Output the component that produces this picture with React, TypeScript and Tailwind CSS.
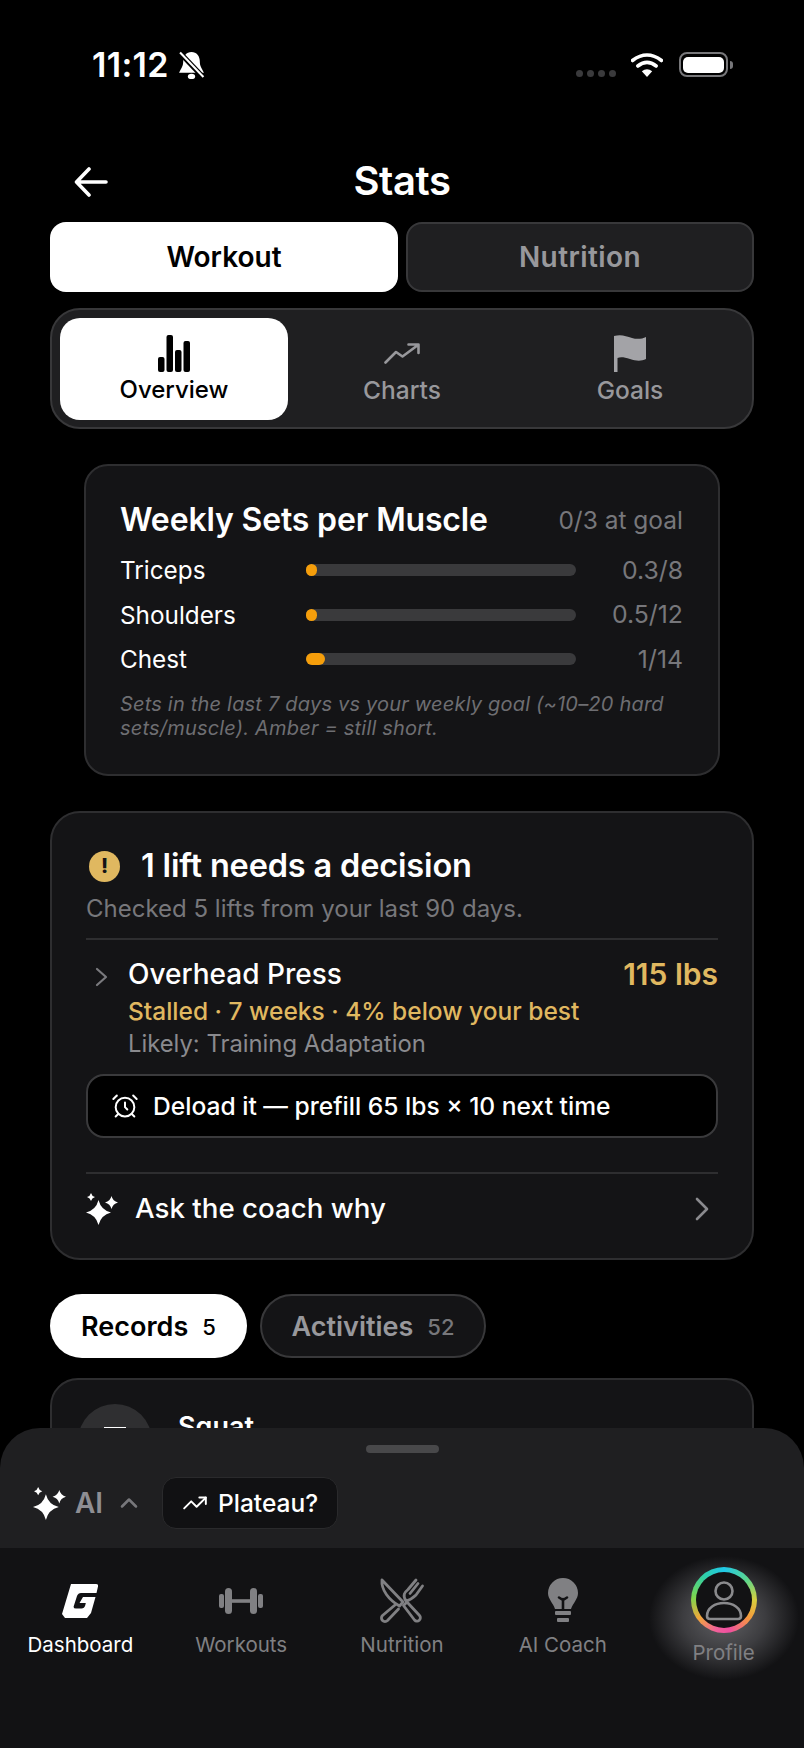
import { AlarmClock, ChevronUp, TrendingUp } from "lucide-react";

function Sparkles({ className }: { className?: string }) {
  return (
    <svg className={className} viewBox="0 0 32 32" fill="currentColor">
      <path d="M12.5 7Q15 17 25 19.5Q15 22 12.5 32Q10 22 0 19.5Q10 17 12.5 7Z" />
      <path d="M5 0Q5.8 3.2 9 4Q5.8 4.8 5 8Q4.2 4.8 1 4Q4.2 3.2 5 0Z" />
      <path d="M25.5 3Q26.8 8.2 32 9.5Q26.8 10.8 25.5 16Q24.2 10.8 19 9.5Q24.2 8.2 25.5 3Z" />
    </svg>
  );
}

function StatusBar() {
  return (
    <div className="flex h-[130px] items-center justify-between pb-[1px] pl-[92px] pr-[71px]">
      <div className="flex items-center gap-[9px]">
        <span className="text-[34px] font-semibold leading-none tracking-[0.01em]">11:12</span>
        <svg className="h-[28px] w-[27px]" viewBox="0 0 26 27">
          <path fill="#fff" d="M13 1C8 1 5 5 5 10C5 15 3 17 1 21H25C23 17 21 15 21 10C21 5 18 1 13 1Z" />
          <ellipse cx="13" cy="24.5" rx="3.5" ry="2.5" fill="#fff" />
          <path d="M2 2L24 25" stroke="#000" strokeWidth="5" />
          <path d="M2 1.5L24.5 25" stroke="#fff" strokeWidth="2" />
        </svg>
      </div>
      <div className="flex items-center">
        <div className="mr-[15px] mt-[18px] flex gap-[4px]">
          <span className="h-[7px] w-[7px] rounded-full bg-[#3a3a3c]" />
          <span className="h-[7px] w-[7px] rounded-full bg-[#3a3a3c]" />
          <span className="h-[7px] w-[7px] rounded-full bg-[#3a3a3c]" />
          <span className="h-[7px] w-[7px] rounded-full bg-[#3a3a3c]" />
        </div>
        <svg className="mr-[16px] h-[24px] w-[32px]" viewBox="0 0 32 24" fill="none">
          <path d="M1.5 7.5Q16 -3.5 30.5 7.5" stroke="#fff" strokeWidth="3.6" strokeLinecap="round" />
          <path d="M6.8 13Q16 5.8 25.2 13" stroke="#fff" strokeWidth="3.6" strokeLinecap="round" />
          <path d="M16 24L10.8 18.2Q16 14.4 21.2 18.2Z" fill="#fff" />
        </svg>
        <div className="flex items-center">
          <div className="flex h-[25px] w-[49px] items-center justify-center rounded-[8px] border-2 border-[#77777a]">
            <div className="h-[16px] w-[41px] rounded-[5px] bg-white" />
          </div>
          <div className="ml-[2px] h-[8px] w-[3px] rounded-r-full bg-[#77777a]" />
        </div>
      </div>
    </div>
  );
}

function Header() {
  return (
    <div className="relative flex h-[92px] items-center justify-center pt-[10px]">
      <svg className="absolute left-[74px] top-[37px] h-[30px] w-[34px]" viewBox="0 0 34 30" fill="none" stroke="#fff" strokeWidth="3.6" strokeLinecap="round" strokeLinejoin="round">
        <path d="M32 15H3M15 2L2.5 15L15 28" />
      </svg>
      <h1 className="text-[40px] font-semibold leading-none tracking-[-0.01em]">Stats</h1>
    </div>
  );
}

function TopTabs() {
  return (
    <div className="mx-[50px] flex gap-[8px]">
      <div className="flex h-[70px] w-[348px] items-center justify-center rounded-[16px] bg-white text-[28px] font-semibold text-black">Workout</div>
      <div className="flex h-[70px] w-[348px] items-center justify-center rounded-[16px] border-2 border-[#38383a] bg-[#1f1f21] text-[28px] font-semibold tracking-[0.015em] text-[#98989c]">Nutrition</div>
    </div>
  );
}

function SubTabs() {
  return (
    <div className="mx-[50px] mt-[16px] grid h-[121px] grid-cols-3 rounded-[30px] border-2 border-[#38383a] bg-[#1f1f21] px-[8px] pb-[7px] pt-[8px]">
      <div className="flex flex-col items-center rounded-[20px] bg-white pt-[17px] text-black">
        <svg className="h-[37px] w-[32px]" viewBox="0 0 32 37" fill="#000">
          <rect x="0" y="22" width="6.5" height="15" rx="2" />
          <rect x="8.5" y="0" width="6.5" height="37" rx="2" />
          <rect x="17" y="15" width="6.5" height="22" rx="2" />
          <rect x="25.5" y="6" width="6.5" height="31" rx="2" />
        </svg>
        <span className="mt-[3px] text-[24px] font-medium leading-[30px]">Overview</span>
      </div>
      <div className="flex flex-col items-center pt-[17px] text-[#98989c]">
        <div className="flex h-[37px] items-end">
          <svg className="mb-[8px] h-[21px] w-[36px]" viewBox="0 0 36 21" fill="none" stroke="#98989c" strokeWidth="2.6" strokeLinecap="round" strokeLinejoin="round">
            <path d="M1.5 19.5L12 9L18.5 13.5L34 2M24.5 1.5H34.5V10" />
          </svg>
        </div>
        <span className="mt-[3px] text-[24.5px] font-medium leading-[30px]">Charts</span>
      </div>
      <div className="flex flex-col items-center pt-[17px] text-[#98989c]">
        <svg className="h-[37px] w-[32px]" viewBox="0 0 32 37" fill="#a3a3a7">
          <path d="M0 1C7 -1 12 1 18 3C23 4.5 28 4 32 2V24C27 26.5 22 26 16 24C10 22 6 22 3.5 23V37H0Z" />
        </svg>
        <span className="mt-[3px] text-[24.5px] font-medium leading-[30px]">Goals</span>
      </div>
    </div>
  );
}

const muscles = [
  { name: "Triceps", value: "0.3/8", fill: 11 },
  { name: "Shoulders", value: "0.5/12", fill: 11 },
  { name: "Chest", value: "1/14", fill: 19 },
];

function WeeklySets() {
  return (
    <div className="mx-[84px] mt-[35px] h-[312px] rounded-[24px] border-2 border-[#2e2e30] bg-[#141416] pl-[34px] pr-[35px] pt-[34px]">
      <div className="flex items-center justify-between">
        <span className="text-[32px] font-semibold leading-[40px] tracking-[-0.005em]">Weekly Sets per Muscle</span>
        <span className="text-[24.5px] leading-[40px] text-[#77777b]">0/3 at goal</span>
      </div>
      <div className="mt-[8px]">
        {muscles.map((m) => (
          <div key={m.name} className="flex h-[44.5px] items-center">
            <span className="w-[186px] text-[24.3px]">{m.name}</span>
            <div className="h-[12px] w-[270px] rounded-full bg-[#3a3a3c]">
              <div className="h-[12px] rounded-full bg-[#f59e0b]" style={{ width: m.fill }} />
            </div>
            <span className="flex-1 text-right text-[24.8px] text-[#77777b]">{m.value}</span>
          </div>
        ))}
      </div>
      <p className="mt-[10px] text-[20px] italic leading-[24px] tracking-[0.01em] text-[#6e6e72]">
        Sets in the last 7 days vs your weekly goal (~10–20 hard sets/muscle). Amber = still short.
      </p>
    </div>
  );
}

function Decision() {
  return (
    <div className="mx-[50px] mt-[35px] h-[449px] rounded-[30px] border-2 border-[#2e2e30] bg-[#141416] px-[34px] pt-[33px]">
      <div className="flex h-[40px] items-center">
        <div className="ml-[3px] flex h-[31px] w-[31px] items-center justify-center rounded-full bg-[#e0b860] text-[20px] font-extrabold text-[#141416]">!</div>
        <span className="ml-[21px] text-[32.5px] font-semibold leading-[40px] tracking-[-0.005em]">1 lift needs a decision</span>
      </div>
      <p className="mt-[8px] text-[24px] leading-[30px] text-[#77777b]">Checked 5 lifts from your last 90 days.</p>
      <div className="mt-[14px] h-[2px] bg-[#2e2e30]" />
      <div className="relative pl-[42px] pt-[16px]">
        <svg className="absolute left-[9px] top-[27px] h-[20px] w-[13px]" viewBox="0 0 13 20" fill="none" stroke="#7a7a7e" strokeWidth="2.2" strokeLinecap="round" strokeLinejoin="round">
          <path d="M2 2L11 10L2 18" />
        </svg>
        <div className="flex items-center justify-between">
          <span className="text-[28px] font-medium leading-[36px]">Overhead Press</span>
          <span className="-mt-[1px] text-[30px] font-semibold leading-[36px] text-[#e0b860]">115 lbs</span>
        </div>
        <p className="mt-[1px] text-[24.5px] font-medium leading-[36px] text-[#e0b860]">Stalled · 7 weeks · 4% below your best</p>
        <p className="text-[23.8px] leading-[30px] text-[#8a8a8e]">Likely: Training Adaptation</p>
      </div>
      <div className="mt-[15px] flex h-[64px] items-center rounded-[18px] border-2 border-[#3a3a3c] bg-black pl-[23px]">
        <AlarmClock className="h-[28px] w-[28px]" strokeWidth={1.7} />
        <span className="ml-[14px] text-[24.6px] font-medium">Deload it — prefill 65 lbs × 10 next time</span>
      </div>
      <div className="mt-[34px] h-[2px] bg-[#2e2e30]" />
      <div className="flex h-[70px] items-center">
        <Sparkles className="h-[32px] w-[32px] text-white" />
        <span className="ml-[17px] flex-1 text-[27.7px] font-medium">Ask the coach why</span>
        <svg className="mr-[8px] h-[24px] w-[16px]" viewBox="0 0 16 24" fill="none" stroke="#8a8a8e" strokeWidth="2.6" strokeLinecap="round" strokeLinejoin="round">
          <path d="M3 2L13 12L3 22" />
        </svg>
      </div>
    </div>
  );
}

function Pills() {
  return (
    <div className="mx-[50px] mt-[34px] flex gap-[13px]">
      <div className="flex h-[64px] w-[197px] items-center justify-center gap-[14px] rounded-full bg-white pt-[3px] text-black">
        <span className="text-[27px] font-semibold">Records</span>
        <span className="text-[22px] font-medium">5</span>
      </div>
      <div className="flex h-[64px] w-[226px] items-center justify-center gap-[14px] rounded-full border-2 border-[#38383a] bg-[#141416] pt-[3px]">
        <span className="text-[27px] font-semibold text-[#98989c]">Activities</span>
        <span className="text-[22px] font-medium text-[#77777b]">52</span>
      </div>
    </div>
  );
}

function RecordCard() {
  return (
    <div className="mx-[50px] mt-[20px] flex h-[200px] items-start gap-[26px] rounded-t-[28px] border-2 border-[#2e2e30] bg-[#141416] pl-[26px] pt-[24px]">
      <div className="flex h-[74px] w-[74px] items-start justify-center rounded-full bg-[#2f2f31] pt-[23px]">
        <div className="h-[3px] w-[22px] bg-white" />
      </div>
      <span className="mt-[5px] text-[27px] font-semibold leading-[36px]">Squat</span>
    </div>
  );
}

function GLogo() {
  return (
    <svg className="h-[34px] w-[36px]" viewBox="0 0 36 34" fill="#fff">
      <path d="M9 0H34Q36.5 0 36 2.5L34.5 9H19Q16.2 9 15 12L11.8 22Q11 24.5 14 24.5H19.5Q22.3 24.5 23.2 21.5L23.8 19H17.5L21 13H33.5L29 29L25 34H3L0 30Z" />
    </svg>
  );
}

function Dumbbell() {
  return (
    <svg className="h-[26px] w-[44px]" viewBox="0 0 44 26" fill="#808083">
      <rect x="0" y="6" width="5" height="14" rx="2" />
      <rect x="6" y="0" width="7" height="26" rx="3.5" />
      <rect x="13" y="11.2" width="18" height="3.6" />
      <rect x="31" y="0" width="7" height="26" rx="3.5" />
      <rect x="39" y="6" width="5" height="14" rx="2" />
    </svg>
  );
}

function Utensils() {
  return (
    <svg className="h-[45px] w-[46px]" viewBox="0 0 46 45" fill="none" stroke="#808083" strokeWidth="2.8" strokeLinecap="round" strokeLinejoin="round">
      <path d="M3 2L24 24L20.5 28C10 22 2 12 3 2Z" />
      <path d="M24.5 27.5L28 24L40.5 37.5A3.2 3.2 0 0 1 35.5 42Z" />
      <path d="M16 27L3.5 37.5A3.2 3.2 0 0 0 8.5 42.5L19.5 31" />
      <path d="M27 23C23 17 26 14 29 11.5L37 2M31 15.5L39 5.5M27 23C31 22 34 20 37 17L43.5 8" />
    </svg>
  );
}

function Bulb() {
  return (
    <svg className="h-[45px] w-[30px]" viewBox="0 0 30 45">
      <path fill="#808083" d="M15 0A15 15 0 0 1 30 15C30 21 25 25 23 31H7C5 25 0 21 0 15A15 15 0 0 1 15 0Z" />
      <path d="M15 31V21M11 19.5L15 22L19 19.5" fill="none" stroke="#121214" strokeWidth="2.6" strokeLinecap="round" />
      <rect x="7" y="33" width="16" height="4" rx="1" fill="#808083" />
      <rect x="9" y="40" width="12" height="4" rx="1" fill="#808083" />
    </svg>
  );
}

function ProfileRing() {
  return (
    <div className="relative flex h-[66px] w-[66px] items-center justify-center rounded-full bg-[conic-gradient(#1fc8e8,#5fd68a_50deg,#d8cf3e_90deg,#f59a3c_125deg,#ef4fa0_170deg,#f0609a_195deg,#f0a83a_235deg,#7dd64e_275deg,#2fcfa8_320deg,#1fc8e8)]">
      <div className="flex h-[56px] w-[56px] items-center justify-center rounded-full bg-[#121214]">
        <svg className="h-[56px] w-[56px]" viewBox="0 0 56 56" fill="none" stroke="#8a8a8d" strokeWidth="2.6">
          <circle cx="28" cy="19" r="8.5" />
          <path d="M14 47H42Q45 47 45 44C45 36 37 31 28 31C19 31 11 36 11 44Q11 47 14 47Z" />
        </svg>
      </div>
    </div>
  );
}

function NavItem({ icon, label, active }: { icon: React.ReactNode; label: string; active?: boolean }) {
  return (
    <div className="flex flex-col items-center">
      <div className="flex h-[45px] items-center justify-center">{icon}</div>
      <span className={active ? "mt-[9px] text-[20.5px] leading-[26px] text-white" : "mt-[9px] text-[20.5px] leading-[26px] text-[#808083]"}>{label}</span>
    </div>
  );
}

function BottomSheet() {
  return (
    <div className="absolute inset-x-0 bottom-0 h-[320px] overflow-hidden rounded-t-[40px] bg-[#1f1f21]">
      <div className="mx-auto mt-[17px] h-[8px] w-[73px] rounded-full bg-[#48484a]" />
      <div className="mt-[24px] flex h-[52px] items-center pl-[33px]">
        <Sparkles className="h-[33px] w-[33px] text-white" />
        <span className="ml-[9px] text-[28px] font-semibold text-[#8e8e93]">AI</span>
        <ChevronUp className="ml-[12px] h-[28px] w-[28px] text-[#77777b]" strokeWidth={2.2} />
        <div className="ml-[19px] flex h-[52px] w-[176px] items-center justify-center gap-[10px] rounded-[14px] border border-[#2a2a2c] bg-[#111113]">
          <TrendingUp className="h-[26px] w-[26px]" strokeWidth={1.8} />
          <span className="text-[24.5px] font-medium">Plateau?</span>
        </div>
      </div>
      <nav className="relative mt-[19px] grid h-[200px] grid-cols-5 overflow-hidden bg-[#121214] pt-[30px]">
        <div className="absolute left-[649px] top-[8px] h-[124px] w-[150px] bg-[radial-gradient(closest-side,rgba(150,150,155,0.6)_0%,rgba(130,130,135,0.38)_55%,rgba(18,18,20,0)_100%)]" />
        <NavItem icon={<GLogo />} label="Dashboard" active />
        <NavItem icon={<Dumbbell />} label="Workouts" />
        <NavItem icon={<Utensils />} label="Nutrition" />
        <NavItem icon={<Bulb />} label="AI Coach" />
        <div className="relative -mt-[11px] flex flex-col items-center">
          <ProfileRing />
          <span className="mt-[7px] text-[20.5px] leading-[26px] text-[#808083]">Profile</span>
        </div>
      </nav>
    </div>
  );
}

export default function App() {
  return (
    <div className="relative h-[1748px] w-[804px] overflow-hidden bg-black font-[Inter,sans-serif] text-white">
      <StatusBar />
      <Header />
      <TopTabs />
      <SubTabs />
      <WeeklySets />
      <Decision />
      <Pills />
      <RecordCard />
      <BottomSheet />
    </div>
  );
}
